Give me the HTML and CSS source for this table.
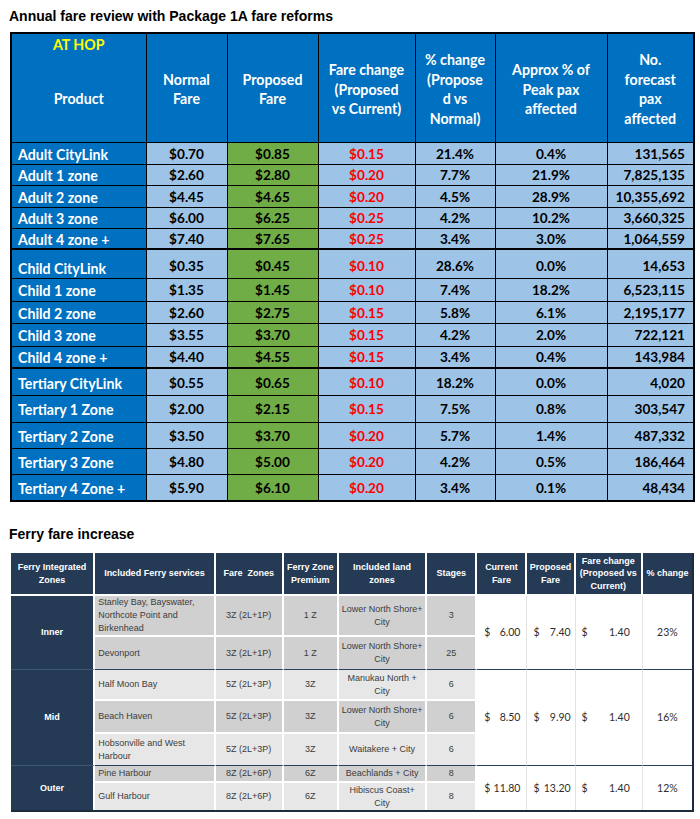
FILE: index.html
```html
<!DOCTYPE html>
<html>
<head>
<meta charset="utf-8">
<link rel="stylesheet" href="styles.css">
</head>
<body>
<div class="page">
<h1 class="title">Annual fare review with Package 1A fare reforms</h1>
<table class="fares">
<colgroup>
<col class="w135"><col class="w81"><col class="w91"><col class="w97"><col class="w80"><col class="w112"><col class="w87">
</colgroup>
<thead>
<tr class="hdr">
<th class="prod-h"><div class="athop">AT HOP</div><div class="prod-label">Product</div></th>
<th>Normal<br>Fare</th>
<th>Proposed<br>Fare</th>
<th>Fare change<br>(Proposed<br>vs Current)</th>
<th>% change<br>(Propose<br>d vs<br>Normal)</th>
<th>Approx % of<br>Peak pax<br>affected</th>
<th>No.<br>forecast<br>pax<br>affected</th>
</tr>
</thead>
<tbody>
<tr class="h22"><td class="prod">Adult CityLink</td><td class="nf">$0.70</td><td class="pf">$0.85</td><td class="ch">$0.15</td><td class="nf">21.4%</td><td class="nf">0.4%</td><td class="nf pax">131,565</td></tr>
<tr class="h21"><td class="prod">Adult 1 zone</td><td class="nf">$2.60</td><td class="pf">$2.80</td><td class="ch">$0.20</td><td class="nf">7.7%</td><td class="nf">21.9%</td><td class="nf pax">7,825,135</td></tr>
<tr class="h22"><td class="prod">Adult 2 zone</td><td class="nf">$4.45</td><td class="pf">$4.65</td><td class="ch">$0.20</td><td class="nf">4.5%</td><td class="nf">28.9%</td><td class="nf pax">10,355,692</td></tr>
<tr class="h21"><td class="prod">Adult 3 zone</td><td class="nf">$6.00</td><td class="pf">$6.25</td><td class="ch">$0.25</td><td class="nf">4.2%</td><td class="nf">10.2%</td><td class="nf pax">3,660,325</td></tr>
<tr class="h21"><td class="prod">Adult 4 zone +</td><td class="nf">$7.40</td><td class="pf">$7.65</td><td class="ch">$0.25</td><td class="nf">3.4%</td><td class="nf">3.0%</td><td class="nf pax">1,064,559</td></tr>
<tr class="h29 grp"><td class="prod low">Child CityLink</td><td class="nf">$0.35</td><td class="pf">$0.45</td><td class="ch">$0.10</td><td class="nf">28.6%</td><td class="nf">0.0%</td><td class="nf pax">14,653</td></tr>
<tr class="h23"><td class="prod">Child 1 zone</td><td class="nf">$1.35</td><td class="pf">$1.45</td><td class="ch">$0.10</td><td class="nf">7.4%</td><td class="nf">18.2%</td><td class="nf pax">6,523,115</td></tr>
<tr class="h22"><td class="prod">Child 2 zone</td><td class="nf">$2.60</td><td class="pf">$2.75</td><td class="ch">$0.15</td><td class="nf">5.8%</td><td class="nf">6.1%</td><td class="nf pax">2,195,177</td></tr>
<tr class="h23"><td class="prod">Child 3 zone</td><td class="nf">$3.55</td><td class="pf">$3.70</td><td class="ch">$0.15</td><td class="nf">4.2%</td><td class="nf">2.0%</td><td class="nf pax">722,121</td></tr>
<tr class="h22"><td class="prod">Child 4 zone +</td><td class="nf">$4.40</td><td class="pf">$4.55</td><td class="ch">$0.15</td><td class="nf">3.4%</td><td class="nf">0.4%</td><td class="nf pax">143,984</td></tr>
<tr class="h27 grp2"><td class="prod">Tertiary CityLink</td><td class="nf">$0.55</td><td class="pf">$0.65</td><td class="ch">$0.10</td><td class="nf">18.2%</td><td class="nf">0.0%</td><td class="nf pax">4,020</td></tr>
<tr class="h27"><td class="prod">Tertiary 1 Zone</td><td class="nf">$2.00</td><td class="pf">$2.15</td><td class="ch">$0.15</td><td class="nf">7.5%</td><td class="nf">0.8%</td><td class="nf pax">303,547</td></tr>
<tr class="h26"><td class="prod">Tertiary 2 Zone</td><td class="nf">$3.50</td><td class="pf">$3.70</td><td class="ch">$0.20</td><td class="nf">5.7%</td><td class="nf">1.4%</td><td class="nf pax">487,332</td></tr>
<tr class="h26"><td class="prod">Tertiary 3 Zone</td><td class="nf">$4.80</td><td class="pf">$5.00</td><td class="ch">$0.20</td><td class="nf">4.2%</td><td class="nf">0.5%</td><td class="nf pax">186,464</td></tr>
<tr class="h27"><td class="prod">Tertiary 4 Zone +</td><td class="nf">$5.90</td><td class="pf">$6.10</td><td class="ch">$0.20</td><td class="nf">3.4%</td><td class="nf">0.1%</td><td class="nf pax">48,434</td></tr>
</tbody>
</table>

<h2 class="title title2">Ferry fare increase</h2>
<table class="ferry">
<colgroup>
<col class="f84"><col class="f120"><col class="f68"><col class="f55"><col class="f88"><col class="f50"><col class="f50"><col class="f48"><col class="f67"><col class="f49">
</colgroup>
<thead>
<tr class="fh">
<th>Ferry Integrated<br>Zones</th>
<th>Included Ferry services</th>
<th>Fare&nbsp; Zones</th>
<th>Ferry Zone<br>Premium</th>
<th>Included land<br>zones</th>
<th>Stages</th>
<th>Current<br>Fare</th>
<th>Proposed<br>Fare</th>
<th>Fare change<br>(Proposed vs<br>Current)</th>
<th class="last">% change</th>
</tr>
</thead>
<tbody>
<tr class="r41">
<td class="zone gend" rowspan="2">Inner</td>
<td class="svc dk">Stanley Bay, Bayswater,<br>Northcote Point and<br>Birkenhead</td>
<td class="dk">3Z (2L+1P)</td>
<td class="dk">1 Z</td>
<td class="dk">Lower North Shore+<br>City</td>
<td class="dk">3</td>
<td class="fare gend cf" rowspan="2"><div class="amt"><span>$</span><span>6.00</span></div></td>
<td class="fare gend pp" rowspan="2"><div class="amt"><span>$</span><span>7.40</span></div></td>
<td class="fare gend fc" rowspan="2"><div class="amt"><span>$</span><span>1.40</span></div></td>
<td class="fare gend pc" rowspan="2">23%</td>
</tr>
<tr class="r33">
<td class="svc dk gend">Devonport</td>
<td class="dk gend">3Z (2L+1P)</td>
<td class="dk gend">1 Z</td>
<td class="dk gend">Lower North Shore+<br>City</td>
<td class="dk gend">25</td>
</tr>
<tr class="r31">
<td class="zone gend" rowspan="3">Mid</td>
<td class="svc lt">Half Moon Bay</td>
<td class="lt">5Z (2L+3P)</td>
<td class="lt">3Z</td>
<td class="lt">Manukau North +<br>City</td>
<td class="lt">6</td>
<td class="fare gend cf" rowspan="3"><div class="amt"><span>$</span><span>8.50</span></div></td>
<td class="fare gend pp" rowspan="3"><div class="amt"><span>$</span><span>9.90</span></div></td>
<td class="fare gend fc" rowspan="3"><div class="amt"><span>$</span><span>1.40</span></div></td>
<td class="fare gend pc" rowspan="3">16%</td>
</tr>
<tr class="r33">
<td class="svc dk">Beach Haven</td>
<td class="dk">5Z (2L+3P)</td>
<td class="dk">3Z</td>
<td class="dk">Lower North Shore+<br>City</td>
<td class="dk">6</td>
</tr>
<tr class="r32">
<td class="svc lt gend">Hobsonville and West<br>Harbour</td>
<td class="lt gend">5Z (2L+3P)</td>
<td class="lt gend">3Z</td>
<td class="lt gend">Waitakere + City</td>
<td class="lt gend">6</td>
</tr>
<tr class="r17">
<td class="zone" rowspan="2">Outer</td>
<td class="svc dk">Pine Harbour</td>
<td class="dk">8Z (2L+6P)</td>
<td class="dk">6Z</td>
<td class="dk">Beachlands + City</td>
<td class="dk">8</td>
<td class="fare cf" rowspan="2"><div class="amt"><span>$</span><span>11.80</span></div></td>
<td class="fare pp" rowspan="2"><div class="amt"><span>$</span><span>13.20</span></div></td>
<td class="fare fc" rowspan="2"><div class="amt"><span>$</span><span>1.40</span></div></td>
<td class="fare pc" rowspan="2">12%</td>
</tr>
<tr class="r27">
<td class="svc lt nb">Gulf Harbour</td>
<td class="lt nb">8Z (2L+6P)</td>
<td class="lt nb">6Z</td>
<td class="lt nb">Hibiscus Coast+<br>City</td>
<td class="lt nb">8</td>
</tr>
</tbody>
</table>
</div>
</body>
</html>
```

FILE: styles.css
```css
* { box-sizing: border-box; }
html, body { margin: 0; padding: 0; background: #fff; }
body { font-family: "Liberation Sans", Arial, sans-serif; color: #000; }
.page { padding: 8px 0 0 9px; }

.title {
  font: bold 14px/16px "Liberation Sans", Arial, sans-serif;
  margin: 0 0 8px 0;
  color: #000;
}
.title2 { margin: 24px 0 11px 0; }

/* ---------- top table ---------- */
.fares {
  border-collapse: collapse;
  table-layout: fixed;
  width: 683px;
  margin-left: 1px;
  border: 2px solid #000;
  font-family: Lato, "Liberation Sans", sans-serif;
  font-weight: bold;
  font-size: 13.6px;
  line-height: 16px;
}
.w135 { width: 135px; }
.w81 { width: 81px; }
.w91 { width: 91px; }
.w97 { width: 97px; }
.w80 { width: 80px; }
.w112 { width: 112px; }
.w87 { width: 87px; }

.fares th, .fares td {
  border: 1px solid #000;
  padding: 0;
}
.fares th {
  background: #0070C0;
  color: #fff;
  font-weight: bold;
  font-size: 14.2px;
  line-height: 19.4px;
  text-align: center;
  vertical-align: middle;
  padding-top: 3px;
}
.fares .hdr { height: 109px; }
.fares th.prod-h { vertical-align: top; padding-top: 1px; }
.athop { color: #FFFF00; }
.prod-label { margin-top: 35px; }

.fares td { vertical-align: middle; padding-top: 1px; }
.fares td.prod {
  background: #0070C0;
  color: #fff;
  font-size: 14.2px;
  padding-left: 6px;
  padding-top: 3px;
  white-space: nowrap;
}
.fares td.nf { background: #9DC3E6; text-align: center; color: #000; }
.fares td.pf { background: #70AD47; text-align: center; color: #000; }
.fares td.ch { background: #9DC3E6; text-align: center; color: #FF0000; }
.fares td.pax { text-align: right; padding-right: 8px; }
.fares tr.grp td { border-top: 2px solid #000; padding-top: 5px; }
.fares tr.grp td.prod { padding-top: 10px; }
.fares tr.grp2 td { border-top: 2px solid #000; padding-top: 2px; }
.fares tr.grp2 td.prod { padding-top: 5px; }

.h21 { height: 21px; }
.h22 { height: 22px; }
.h23 { height: 23px; }
.h26 { height: 26px; }
.h27 { height: 27px; }
.h29 { height: 29px; }

/* ---------- ferry table ---------- */
.ferry {
  border-collapse: separate;
  border-spacing: 0;
  table-layout: fixed;
  width: 683px;
  margin-left: 2px;
  border-right: 2px solid #1E2B3C;
  border-bottom: 2px solid #1E2B3C;
  font-family: "Liberation Sans", Arial, sans-serif;
  font-size: 9px;
  line-height: 13px;
  color: #3C3C3C;
}
.f84 { width: 84px; }
.f120 { width: 120px; }
.f68 { width: 68px; }
.f55 { width: 55px; }
.f88 { width: 88px; }
.f50 { width: 50px; }
.f48 { width: 48px; }
.f67 { width: 67px; }
.f49 { width: 49px; }

.ferry th {
  background: #253A55;
  color: #fff;
  font-weight: bold;
  font-size: 9px;
  line-height: 12.5px;
  text-align: center;
  vertical-align: middle;
  padding: 0;
  border-right: 2px solid #fff;
  border-bottom: 2px solid #fff;
}
.ferry th.last { border-right: none; }
.fh { height: 43px; }

.ferry td {
  padding: 0;
  text-align: center;
  vertical-align: middle;
  border-right: 2px solid #fff;
  border-bottom: 2px solid #fff;
}
.ferry td.zone {
  background: #253A55;
  color: #fff;
  font-weight: bold;
  border-bottom: none;
}
.ferry td.zone.gend { border-bottom: 1px solid #3D5676; }
.ferry td.svc { text-align: left; padding-left: 3px; }
.ferry td.dk { background: #D0D0D0; }
.ferry td.lt { background: #E7E7E7; }
.ferry td.gend { border-bottom: 1px solid #2A3F5B; }
.ferry td.nb { border-bottom: none; }

.ferry td.fare {
  background: #fff;
  border-right: 1px solid #E2E2E2;
  border-bottom: none;
  font-family: Lato, "Liberation Sans", sans-serif;
  font-size: 10.5px;
  color: #2E2E2E;
}
.ferry td.fare.gend { border-bottom: 1px solid #2A3F5B; }
.ferry td.pc { border-right: none; }
.amt { display: flex; justify-content: space-between; }
.cf .amt { padding: 0 6px 0 7px; }
.pp .amt { padding: 0 4px 0 6px; }
.fc .amt { padding: 0 12px 0 6px; }

.r41 { height: 41px; }
.r33 { height: 33px; }
.r31 { height: 31px; }
.r32 { height: 32px; }
.r17 { height: 17px; }
.r27 { height: 27px; }
```
